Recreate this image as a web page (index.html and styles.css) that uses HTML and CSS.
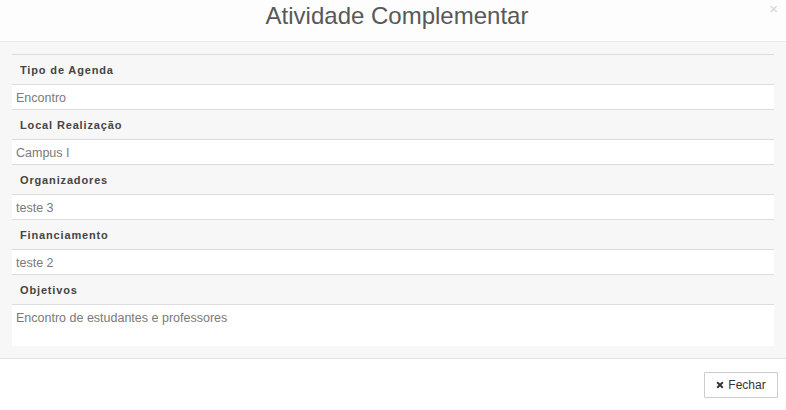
FILE: index.html
```html
<!DOCTYPE html>
<html lang="pt-BR">
<head>
<meta charset="utf-8">
<title>Atividade Complementar</title>
<link rel="stylesheet" href="styles.css">
</head>
<body>
<div class="modal">
  <div class="modal-header">
    <h4 class="modal-title">Atividade Complementar</h4>
    <button class="close" type="button">×</button>
  </div>
  <div class="modal-body">
    <div class="details">
      <div class="label">Tipo de Agenda</div>
      <div class="value">Encontro</div>
      <div class="label">Local Realização</div>
      <div class="value">Campus I</div>
      <div class="label">Organizadores</div>
      <div class="value">teste 3</div>
      <div class="label">Financiamento</div>
      <div class="value">teste 2</div>
      <div class="label">Objetivos</div>
      <div class="value tall">Encontro de estudantes e professores</div>
    </div>
  </div>
  <div class="modal-footer">
    <button class="btn" type="button">
      <svg class="icon" viewBox="0 0 10 10" width="8" height="8"><path d="M1.5 1.5 L8.5 8.5 M8.5 1.5 L1.5 8.5" stroke="#333" stroke-width="2.4" stroke-linecap="butt"/></svg>
      Fechar
    </button>
  </div>
</div>
</body>
</html>
```
FILE: styles.css
```css
* { box-sizing: border-box; }
html, body {
  margin: 0;
  padding: 0;
  background: #fff;
  font-family: "Liberation Sans", Arial, sans-serif;
}
.modal {
  width: 786px;
  height: 410px;
  display: flex;
  flex-direction: column;
}
.modal-header {
  position: relative;
  height: 42px;
  background: #fdfdfd;
  border-bottom: 1px solid #e8e8e8;
  display: flex;
  justify-content: center;
}
.modal-title {
  margin: 0;
  padding-top: 2px;
  font-size: 24px;
  line-height: 28px;
  font-weight: normal;
  color: #585858;
  margin-left: 8px;
}
.close {
  position: absolute;
  top: 1px;
  right: 8px;
  border: 0;
  background: transparent;
  padding: 0;
  font-family: "Liberation Sans", Arial, sans-serif;
  font-size: 15px;
  line-height: 16px;
  color: #d4d4d4;
}
.modal-body {
  background: #f7f7f7;
  padding: 12px 12px 12px 12px;
  border-bottom: 1px solid #e3e3e3;
}
.details {
  display: flex;
  flex-direction: column;
}
.label {
  border-top: 1px solid #dcdcdc;
  padding: 8px 8px 6px 8px;
  font-size: 11px;
  line-height: 15px;
  font-weight: bold;
  letter-spacing: 0.85px;
  color: #444;
}
.value {
  border-top: 1px solid #dcdcdc;
  background: #fff;
  padding: 6px 4px 4px 4px;
  font-size: 12.5px;
  line-height: 14px;
  color: #7a7a7a;
}
.value.tall {
  height: 42px;
}
.modal-footer {
  flex: 1;
  display: flex;
  justify-content: flex-end;
  align-items: flex-start;
  padding: 13px 8px 0 0;
  background: #fff;
}
.btn {
  display: flex;
  align-items: center;
  gap: 4px;
  height: 26px;
  width: 74px;
  justify-content: center;
  border: 1px solid #ccc;
  border-radius: 1px;
  background: #fff;
  font-family: "Liberation Sans", Arial, sans-serif;
  font-size: 12px;
  color: #333;
  padding: 0 6px;
}
.icon { display: block; }
```
